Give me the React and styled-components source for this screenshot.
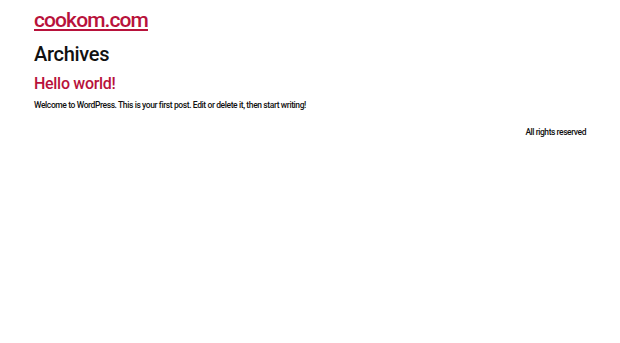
import React from 'react';
import styled, { createGlobalStyle } from 'styled-components';

const GlobalStyle = createGlobalStyle`
    body {
        margin: 0;
        background: #fff;
        font-family: Roboto, "Liberation Sans", sans-serif;
        color: #111;
    }
`;

const Page = styled.div`
    padding: 0 34px;
`;

const Header = styled.header`
    margin-top: 6px;
    line-height: 28px;
`;

const SiteTitle = styled.a`
    font-size: 21px;
    font-weight: 500;
    letter-spacing: -0.9px;
    color: #b8123b;
    text-decoration: underline;
    text-decoration-thickness: 2px;
    text-underline-offset: 2px;
`;

const PageTitle = styled.h1`
    margin: 5px 0 0;
    font-size: 20px;
    font-weight: 500;
    letter-spacing: -0.3px;
    line-height: 26px;
`;

const PostTitle = styled.h2`
    margin: 6px 0 0;
    font-size: 16px;
    font-weight: 500;
    letter-spacing: -0.3px;
    color: #b8123b;
    line-height: 22px;
`;

const PostText = styled.p`
    margin: 4px 0 0;
    font-size: 8.5px;
    font-weight: 500;
    letter-spacing: -0.4px;
    line-height: 12px;
`;

const Footer = styled.footer`
    display: flex;
    justify-content: flex-end;
    margin-top: 15px;
    font-size: 8.5px;
    font-weight: 500;
    letter-spacing: -0.45px;
    line-height: 12px;
`;

export default function App() {
    return (
        <Page>
            <GlobalStyle />
            <Header>
                <SiteTitle href="#">cookom.com</SiteTitle>
            </Header>
            <PageTitle>Archives</PageTitle>
            <PostTitle>Hello world!</PostTitle>
            <PostText>Welcome to WordPress. This is your first post. Edit or delete it, then start writing!</PostText>
            <Footer>All rights reserved</Footer>
        </Page>
    );
}
